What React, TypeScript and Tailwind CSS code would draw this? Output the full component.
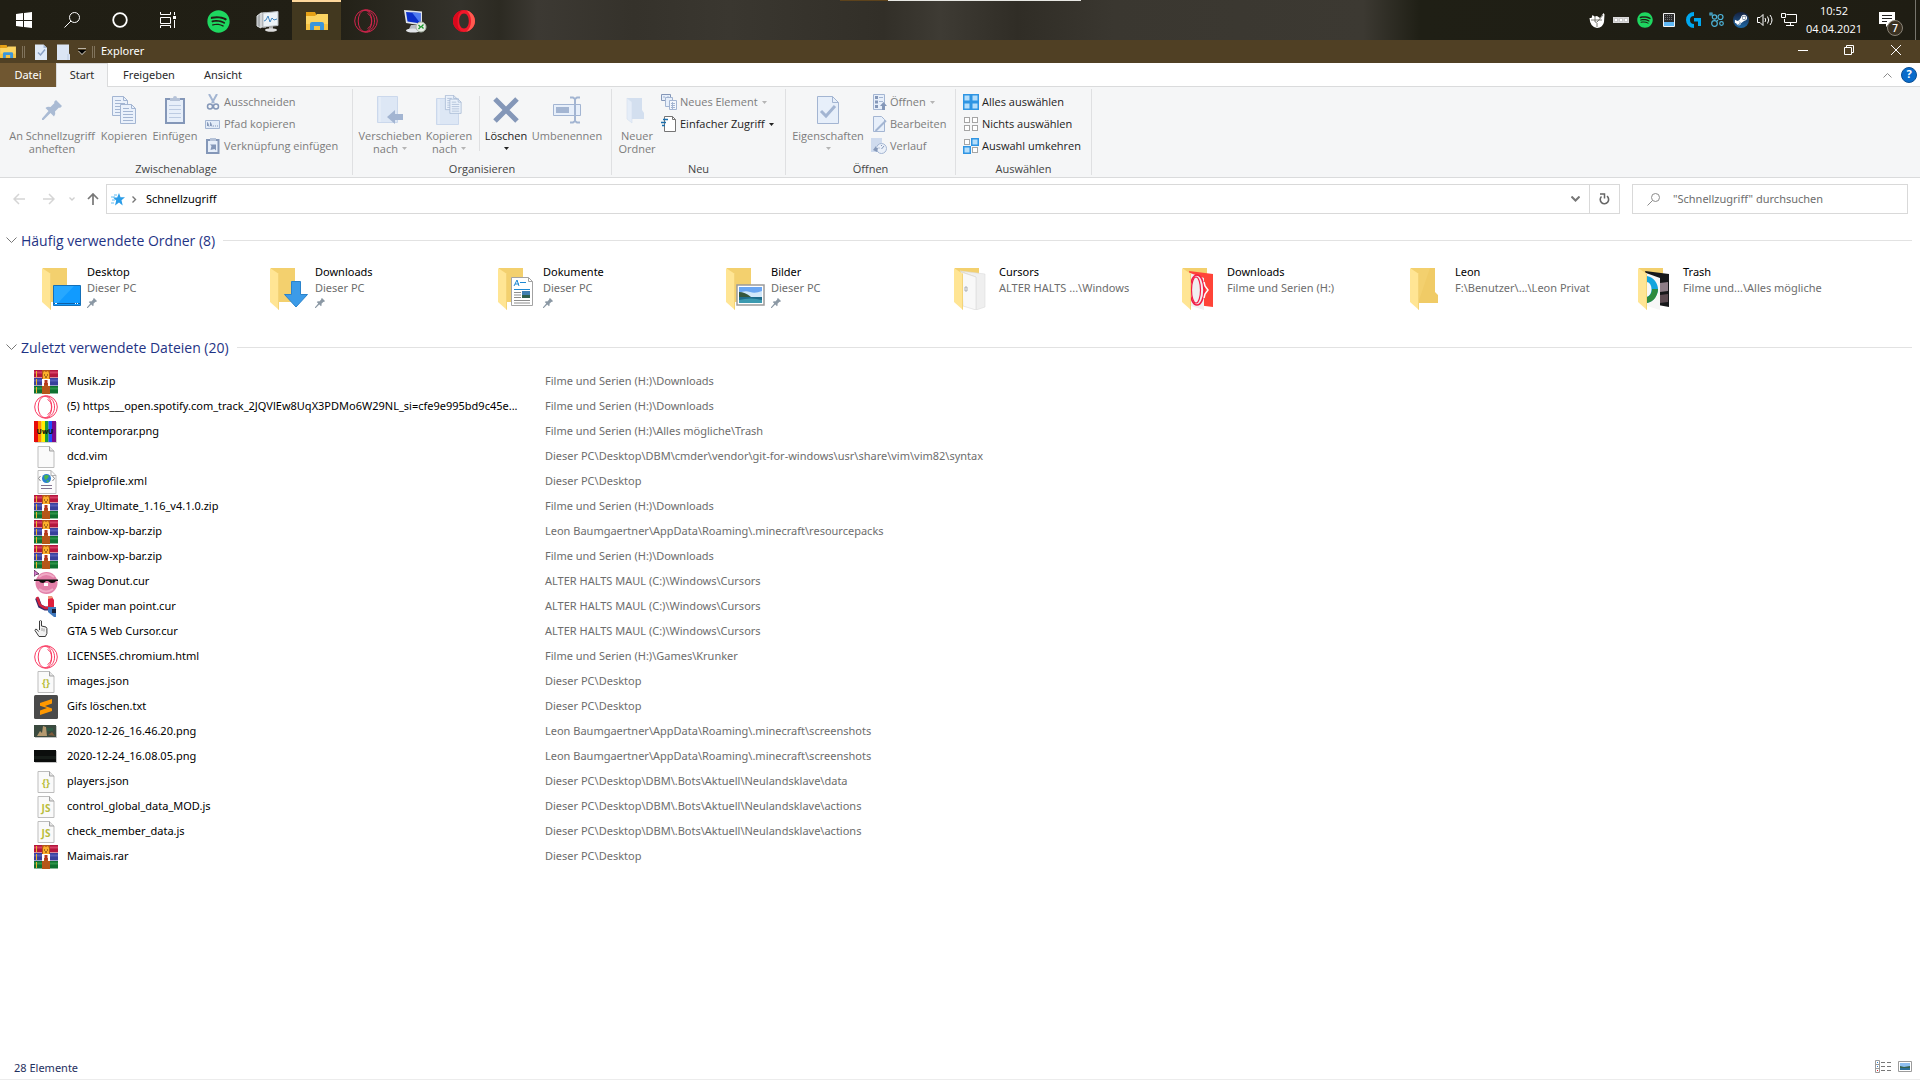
import { useState } from "react";
import type { ReactNode } from "react";
import { FaSpotify, FaSteamSymbol } from "react-icons/fa";

type IconProps = { size?: number };

/* ---------- shared icons ---------- */

function Svg({ w = 16, h = w, box, children }: { w?: number; h?: number; box?: string; children: ReactNode }) {
  return (
    <svg width={w} height={h} viewBox={box ?? `0 0 ${w} ${h}`} fill="none" className="shrink-0" aria-hidden="true">
      {children}
    </svg>
  );
}

function ExplorerIcon({ size = 22 }: IconProps) {
  return (
    <Svg w={size} h={Math.round((size * 18) / 22)} box="0 0 22 18">
      <path d="M0 0h9l1 2v4H0z" fill="#e6a117" />
      <path d="M0 4h9l2-2h11v15H0z" fill="#fcd462" />
      <path d="M0 12h22v6H0z" fill="#f6c343" />
      <path d="M4 18v-6q0-2 2-2h10q2 0 2 2v6h-4v-4H8v4z" fill="#3a96dd" />
    </Svg>
  );
}

function OperaGxIcon({ size = 24, color = "#fa3a62" }: IconProps & { color?: string }) {
  return (
    <Svg w={size} box="0 0 24 24">
      <g stroke={color}>
        <circle cx="12" cy="12" r="11.3" />
        <ellipse cx="11" cy="12" rx="6.8" ry="10.8" />
        <path d="M13.500 4.500c2.700 1.200 4 4 4 7.500s-1.300 6.300-4 7.500" />
        <path d="M13 1c5 2 7.500 6 7.500 11S18 21 13 23" />
      </g>
    </Svg>
  );
}

function Caret({ dark }: { dark?: boolean }) {
  return (
    <Svg w={5} h={3}>
      <path d="M0 0h5L2.500 3z" fill={dark ? "#222222" : "#b5b5b5"} />
    </Svg>
  );
}

function PinIcon({ size = 10, color = "#8b98a4" }: IconProps & { color?: string }) {
  return (
    <Svg w={size} box="0 0 20 20">
      <path d="M14 0l6 6-2 2-1-.5-4 4q1 3-1 5l-3.500-3.500L1.500 20 0 20v-1.500L6.500 11 3.500 8q2-2 5-1l4-4L12 2z" fill={color} />
    </Svg>
  );
}

/* ---------- taskbar ---------- */

const taskbarApps: { label: string; icon: ReactNode; active?: boolean }[] = [
  { label: "Spotify", icon: <FaSpotify size={23} color="#1ed760" /> },
  {
    label: "Leistungsüberwachung",
    icon: (
      <Svg w={24} h={22}>
        <path d="M1 6l4-3v15l-4-2zM5 3h5v14H5z" fill="#a9adb0" stroke="#dfe2e4" />
        <path d="M7 3l15-1.500v14L7 17z" fill="#edf3f7" stroke="#b9bec2" />
        <path d="M8 11l2-1 2-4 2 6 2-4 2 2 3-1" stroke="#3f83bd" />
        <path d="M13 16h4v3h-4z" fill="#aaa" />
        <ellipse cx="15" cy="20" rx="6" ry="1.800" fill="#dcdcdc" />
      </Svg>
    ),
  },
  { label: "Explorer", icon: <ExplorerIcon />, active: true },
  { label: "Opera GX", icon: <OperaGxIcon color="#d3244d" /> },
  {
    label: "Remotedesktop",
    icon: (
      <Svg w={24} h={24}>
        <path d="M1 1l18 1.500v14L3 14z" fill="#e0e4ea" />
        <path d="M3 3l14.500 1v10.500L4.500 12.500z" fill="#0b2fc9" />
        <path d="M9 3.500l8.500.5v10.500z" fill="#4f7bf0" />
        <path d="M8 16h6l2 4H6z" fill="#b9bdc4" />
        <ellipse cx="10" cy="21.500" rx="7" ry="2" fill="#e2e4e8" />
        <circle cx="18" cy="18" r="5" fill="#e9ece6" stroke="#a9b3a5" />
        <path d="M15.500 16l2 2-2 2M20.500 15.500l-2 2 2 2" stroke="#1e9a2f" strokeWidth="1.300" />
      </Svg>
    ),
  },
  {
    label: "Opera",
    icon: (
      <Svg w={24} h={24}>
        <path
          d="M12 1c6 0 11 5 11 11s-5 11-11 11S1 18 1 12 6 1 12 1zm0 3.500c-3 0-4.800 3.400-4.800 7.500s1.800 7.500 4.800 7.500 4.800-3.400 4.800-7.500S15 4.500 12 4.500z"
          fill="#f0182a"
          fillRule="evenodd"
        />
        <path d="M14 1.200c5 1 9 5.500 9 10.800s-4 9.800-9 10.800c3-2 5-6 5-10.800s-2-8.800-5-10.800z" fill="#ff5a50" />
        <path d="M12 1C6 1 1 6 1 12s5 11 11 11c-2-.3-3.500-1-4.800-3C5 18 5 6 7.500 4 9 2 10.500 1.300 12 1z" fill="#d9081c" />
      </Svg>
    ),
  },
];

const trayIcons: { label: string; icon: ReactNode }[] = [
  {
    label: "Foldervisor",
    icon: (
      <Svg>
        <path d="M.5 6h2l1-3 2 1.500L8 4l3 2 3.500-5 1 1.500-.5 7.500q-1 5.500-7 6-7-1-7.500-10z" fill="#fff" />
        <path d="M2 8h11M6 4v6M9 9l5-6M6 10q2 1 3-1M8 11v4" stroke="#5b5a52" strokeWidth=".8" />
      </Svg>
    ),
  },
  {
    label: "Tastatur",
    icon: (
      <Svg>
        <path d="M0 5h16v6H0z" fill="#d9d9d9" />
        <path d="M1.500 6.500h3v3h-3zM6.500 6.500h3v3h-3zM11.500 6.500h3v3h-3z" fill="#fff" stroke="#b5b5b5" strokeWidth=".6" />
      </Svg>
    ),
  },
  { label: "Spotify", icon: <FaSpotify size={16} color="#1ed760" /> },
  {
    label: "Touchpad",
    icon: (
      <Svg>
        <path d="M2.500 1.500h11v13h-11z" fill="#2b2b2b" stroke="#f2f2f2" />
        <path d="M3 10h10v4H3z" fill="#5fb8f5" />
        <path d="M4 3.500h8M4 5.500h8M4 7.500h8" stroke="#777" strokeDasharray="1 1" />
      </Svg>
    ),
  },
  {
    label: "Logitech G HUB",
    icon: (
      <Svg>
        <path d="M9 0v4a4 4 0 0 0 0 8v4A8 8 0 0 1 9 0z" fill="#00a8f0" />
        <path d="M9 6h7v8h-3v-4.500H9z" fill="#00a8f0" />
      </Svg>
    ),
  },
  {
    label: "Verbindungen",
    icon: (
      <Svg>
        <g stroke="#4db4da" strokeWidth="1.200">
          <circle cx="5.500" cy="5" r="2.200" />
          <circle cx="11.500" cy="5" r="2.500" />
          <circle cx="5.500" cy="11.500" r="2.800" />
          <circle cx="12.500" cy="11.500" r="1.800" />
          <path d="M1 1h2v2H1zM8 8l1 1" />
        </g>
      </Svg>
    ),
  },
  {
    label: "Steam",
    icon: (
      <span className="flex size-4 items-center justify-center rounded-full bg-linear-to-b from-[#14213f] to-[#1d6aa8] text-white">
        <FaSteamSymbol size={14} />
      </span>
    ),
  },
  {
    label: "Lautstärke",
    icon: (
      <Svg>
        <g stroke="#fff">
          <path d="M.5 5.500h2.500l3-3v11l-3-3H.5z" />
          <path d="M8 6q1.500 2 0 4M10.500 4.500q2.500 3.500 0 7M13 3q4 5 0 10" />
        </g>
      </Svg>
    ),
  },
  {
    label: "Netzwerk",
    icon: (
      <Svg>
        <g stroke="#fff">
          <path d="M5.500 2.500h10v8H3.500V7M.5 1.500h4v4h-4zM9.500 10.500v3M5 13.500h8" />
        </g>
      </Svg>
    ),
  },
];

function Taskbar() {
  return (
    <header className="relative flex h-10 items-stretch bg-[linear-gradient(to_right,#201e14_0%,#211f15_17%,#34322b_24%,#2c2a22_26%,#3c3933_28%,#35322b_33%,#3a3730_38%,#322f28_46%,#3e3b34_49%,#302d26_53%,#3a3730_58%,#3c3932_71%,#1f1f15_74%,#1f1d13_100%)] text-white">
      <nav aria-label="Taskleiste" className="flex items-stretch">
        <TaskButton label="Start">
          <Svg w={16}>
            <path d="M0 2l7-1v7H0zM8 1l8-1v8H8zM0 9h7v6l-7-1zM8 9h8v7l-8-1z" fill="#fff" />
          </Svg>
        </TaskButton>
        <TaskButton label="Suche">
          <Svg w={16}>
            <circle cx="10.500" cy="5.500" r="5" stroke="#fff" />
            <path d="M7 9l-6.500 6.500" stroke="#fff" />
          </Svg>
        </TaskButton>
        <TaskButton label="Cortana">
          <Svg w={16}>
            <circle cx="8" cy="8" r="6.800" stroke="#fff" strokeWidth="1.800" />
          </Svg>
        </TaskButton>
        <TaskButton label="Aktive Anwendungen">
          <Svg w={16}>
            <path d="M.5 0v2.500h10V0M.5 5.500h10v6H.5zM.5 16v-2.500h10V16M14.500 0v3M14.500 8v8" stroke="#fff" />
            <path d="M13 4h3v3h-3z" fill="#fff" />
          </Svg>
        </TaskButton>
        <div className="ml-[2px] flex items-stretch">
          {taskbarApps.map((app) => (
            <button
              key={app.label}
              type="button"
              aria-label={app.label}
              className={`flex w-[49px] items-center justify-center border-t-2 ${
                app.active ? "border-[#ffd89b] bg-[#42381f]" : "border-transparent"
              }`}
            >
              {app.icon}
            </button>
          ))}
        </div>
      </nav>
      {/* edge of the hidden media overlay */}
      <div className="absolute left-[840px] top-0 flex h-px">
        <span className="w-12 bg-[#5d431c]" />
        <span className="w-[193px] bg-[#e8e8e4]" />
      </div>
      <div className="ml-auto flex items-stretch">
        {trayIcons.map((t) => (
          <button key={t.label} type="button" aria-label={t.label} className="flex w-6 items-center justify-center">
            {t.icon}
          </button>
        ))}
        <button type="button" className="w-[66px] text-center text-[11px] leading-[18px]">
          10:52
          <br />
          04.04.2021
        </button>
        <button type="button" aria-label="7 neue Benachrichtigungen" className="relative flex w-12 items-center justify-center pr-2">
          <Svg w={16}>
            <path d="M0 0h16v12h-6l-3 3v-3H0z" fill="#fff" />
            <path d="M3 3.500h10M3 6.500h10M3 9.500h5" stroke="#222" />
          </Svg>
          <span className="absolute bottom-1 right-3 flex size-4 items-center justify-center rounded-full border border-[#8a8478] bg-[#3a3122] text-[10px] font-semibold">
            7
          </span>
        </button>
        <span className="w-[5px] border-l border-[#77756d]" />
      </div>
    </header>
  );
}

function TaskButton({ label, children }: { label: string; children: ReactNode }) {
  return (
    <button type="button" aria-label={label} className="flex w-12 items-center justify-center">
      {children}
    </button>
  );
}

/* ---------- title bar + tabs ---------- */

function TitleBar() {
  return (
    <div className="flex h-[23px] items-center bg-[#504024] text-white">
      <ExplorerIcon size={16} />
      <span className="ml-1.5 h-3 w-[3px] border-x border-[#80735c]" />
      <button type="button" aria-label="Eigenschaften" className="ml-2.5">
        <Svg w={12} h={16}>
          <path d="M0 .5h8.500L12 4v12H0z" fill="#dfe9f6" />
          <path d="M8.500.5L12 4H8.500z" fill="#a9bbd6" />
          <path d="M3 8.500l2.500 2.500L10 5.500" stroke="#8ba1c2" strokeWidth="1.500" />
        </Svg>
      </button>
      <button type="button" aria-label="Neuer Ordner" className="ml-2.5">
        <Svg w={13} h={16}>
          <path d="M0 .5h12v9l1 1V16H0z" fill="#dbe5f4" />
          <path d="M11 10v6" stroke="#b9c8df" />
        </Svg>
      </button>
      <button type="button" aria-label="Symbolleiste anpassen" className="ml-2">
        <Svg w={8} h={7}>
          <path d="M0 .5h8" stroke="#b9b2a4" />
          <path d="M0 3h8L4 7z" fill="#d8d4cb" />
          <path d="M0 2h8L4 6z" fill="#000" />
        </Svg>
      </button>
      <span className="ml-1.5 h-3 w-[3px] border-x border-[#80735c]" />
      <h1 className="ml-1.5 font-['Noto_Sans',sans-serif] text-[11px]">Explorer</h1>
      <div className="mb-[3px] ml-auto flex items-stretch self-stretch">
        <button type="button" aria-label="Minimieren" className="flex w-[46px] items-center justify-center">
          <Svg w={10}>
            <path d="M0 5.500h10" stroke="#fff" />
          </Svg>
        </button>
        <button type="button" aria-label="Verkleinern" className="flex w-[46px] items-center justify-center">
          <Svg w={10}>
            <path d="M.5 2.500h7v7h-7zM2.500 2V.5h7v7H8" stroke="#fff" />
          </Svg>
        </button>
        <button type="button" aria-label="Schließen" className="flex w-12 items-center justify-center">
          <Svg w={10}>
            <path d="M0 0l10 10M10 0L0 10" stroke="#fff" />
          </Svg>
        </button>
      </div>
    </div>
  );
}

const tabs = [
  { name: "Start", width: "w-[52px]" },
  { name: "Freigeben", width: "w-[82px]" },
  { name: "Ansicht", width: "w-[66px]" },
];

function TabBar() {
  const [active, setActive] = useState("Start");
  return (
    <div className="flex h-6 items-stretch border-b border-[#dadbdc] font-['Noto_Sans',sans-serif] text-[11px] text-[#2b2b2b]">
      <button type="button" className="-mb-px w-14 bg-[#705731] text-white">
        Datei
      </button>
      {tabs.map((tab) => (
        <button
          key={tab.name}
          type="button"
          onClick={() => setActive(tab.name)}
          className={`-mb-px ${tab.width} ${
            tab.name === active ? "border-x border-t border-[#dadbdc] bg-[#f5f6f7]" : ""
          }`}
        >
          {tab.name}
        </button>
      ))}
      <div className="ml-auto flex items-center gap-[9px] pr-[3px]">
        <button type="button" aria-label="Menüband minimieren">
          <Svg w={9} h={6}>
            <path d="M.5 5.500l4-4 4 4" stroke="#8a8a8a" />
          </Svg>
        </button>
        <button
          type="button"
          aria-label="Hilfe"
          className="flex size-4 items-center justify-center rounded-full border border-[#0b4f94] bg-[#0a6ccb] text-[11px] font-bold text-white"
        >
          ?
        </button>
      </div>
    </div>
  );
}

/* ---------- ribbon ---------- */

// colours of the greyed-out ribbon artwork
const LINE = "#a3b5d2";
const FILL = "#dde7f5";
const DEEP = "#8497b8";

function BigButton({
  icon,
  lines,
  width,
  caret,
  enabled,
}: {
  icon: ReactNode;
  lines: string[];
  width: string;
  caret?: boolean;
  enabled?: boolean;
}) {
  return (
    <button
      type="button"
      disabled={!enabled}
      className={`flex ${width} shrink-0 flex-col items-center pt-[5px] text-[11px] leading-[13px] whitespace-nowrap ${
        enabled ? "text-[#222222]" : "text-[#7c7c7c]"
      }`}
    >
      <span className="mb-[5px] flex h-7 items-center">{icon}</span>
      <span>{lines[0]}</span>
      <span className="flex h-[13px] items-center gap-1">
        {lines[1]}
        {caret && <Caret dark={enabled} />}
      </span>
    </button>
  );
}

function SmallButton({ icon, label, caret, enabled }: { icon: ReactNode; label: string; caret?: boolean; enabled?: boolean }) {
  return (
    <button
      type="button"
      disabled={!enabled}
      className={`flex h-[22px] items-center gap-[3px] text-[11px] whitespace-nowrap ${
        enabled ? "text-[#222222]" : "text-[#7c7c7c]"
      }`}
    >
      {icon}
      <span className="pr-px">{label}</span>
      {caret && <Caret dark={enabled} />}
    </button>
  );
}

function RibbonGroup({ label, width, children }: { label: string; width: string; children: ReactNode }) {
  return (
    <>
      <section aria-label={label} className={`${width} flex shrink-0 flex-col pt-1`}>
        <div className="flex h-[66px]">{children}</div>
        <div className="mt-1 h-4 text-center text-[11px] leading-4 text-[#444444]">{label}</div>
      </section>
      <span className="my-[2px] w-px bg-[#dfe0e2]" />
    </>
  );
}

function DocLines({ x, y }: { x: number; y: number }) {
  return (
    <g transform={`translate(${x} ${y})`}>
      <path d="M.5.5h11l4 4v15H.5z" fill="#eaf1fb" stroke={LINE} />
      <path d="M11.500.5v4h4" stroke={LINE} />
      <path d="M3 4.500h6M3 7.500h10M3 10.500h10M3 13.500h10M3 16.500h10" stroke={LINE} />
    </g>
  );
}

function SelectGrid({ on }: { on: boolean[] }) {
  const spots = [[1, 1], [9, 1], [1, 9], [9, 9]];
  return (
    <Svg>
      {spots.map(([x, y], i) =>
        on[i] ? (
          <rect key={i} x={x - 0.25} y={y - 0.25} width="6.500" height="6.500" fill="#b5defb" stroke="#2f95e3" strokeWidth="1.500" />
        ) : (
          <rect key={i} x={x + 0.5} y={y + 0.5} width="5" height="5" fill="#fff" stroke="#a5a5a5" />
        )
      )}
    </Svg>
  );
}

function Ribbon() {
  return (
    <div className="flex border-b border-[#dadbdc] bg-[#f5f6f7]">
      <RibbonGroup label="Zwischenablage" width="w-[352px]">
        <div className="flex pl-1">
          <BigButton width="w-24" lines={["An Schnellzugriff", "anheften"]} icon={<PinIcon size={20} color="#aabbd4" />} />
          <BigButton
            width="w-12"
            lines={["Kopieren"]}
            icon={
              <Svg w={24} h={28}>
                <DocLines x={0} y={0} />
                <DocLines x={8} y={8} />
              </Svg>
            }
          />
          <BigButton
            width="w-[54px]"
            lines={["Einfügen"]}
            icon={
              <Svg w={20} h={28}>
                <path d="M1 3h18v24H1z" fill="#e7effa" stroke={DEEP} strokeWidth="2" />
                <path d="M5 5V2h3q0-2 2-2t2 2h3v3z" fill="#b6c3d8" />
                <path d="M4 9.500h12M4 13.500h12M4 17.500h12M4 21.500h12" stroke="#bccbe2" />
              </Svg>
            }
          />
        </div>
        <div className="ml-[3px] flex flex-col">
          <SmallButton
            label="Ausschneiden"
            icon={
              <Svg>
                <path d="M4 0l5 9M12 0L7 9" stroke={LINE} strokeWidth="2" />
                <circle cx="5" cy="12.500" r="2.500" stroke={DEEP} strokeWidth="1.500" />
                <circle cx="11" cy="12.500" r="2.500" stroke={DEEP} strokeWidth="1.500" />
              </Svg>
            }
          />
          <SmallButton
            label="Pfad kopieren"
            icon={
              <Svg>
                <path d="M.5 4.500h14v8H.5z" fill="#e3ecf8" stroke={LINE} />
                <path d="M2.500 6.500l1.500 4M5.500 6.500l1.500 4M2.500 10V6.500M5.500 10V6.500M8 10h1M10 10h1M12 10h1" stroke={DEEP} />
              </Svg>
            }
          />
          <SmallButton
            label="Verknüpfung einfügen"
            icon={
              <Svg>
                <path d="M2 2h11.500v13H2z" fill="#e7effa" stroke={DEEP} strokeWidth="2" />
                <path d="M5 0h6v3H5z" fill="#b6c3d8" />
                <path d="M5.500 12l1-4-1.500-1.500h6v6L9.500 11z" fill={DEEP} />
              </Svg>
            }
          />
        </div>
      </RibbonGroup>

      <RibbonGroup label="Organisieren" width="w-[258px]">
        <div className="flex pl-[5px]">
          <BigButton
            width="w-16"
            lines={["Verschieben", "nach"]}
            caret
            icon={
              <Svg w={26} h={28}>
                <path d="M.5.5h20v26H.5z" fill={FILL} stroke="#cbd8ec" />
                <path d="M3 1v25" stroke="#ecf2fa" />
                <path d="M10 21l8-7v4h8v6h-8v4z" fill={LINE} />
              </Svg>
            }
          />
          <BigButton
            width="w-[54px]"
            lines={["Kopieren", "nach"]}
            caret
            icon={
              <Svg w={26} h={30}>
                <path d="M.5 3.500h22v26H.5z" fill={FILL} stroke="#cbd8ec" />
                <path d="M3 4v25" stroke="#ecf2fa" />
                <g transform="translate(9 0) scale(.75)">
                  <DocLines x={0} y={0} />
                  <DocLines x={6} y={5} />
                </g>
              </Svg>
            }
          />
          <span className="ml-[3px] mt-[5px] h-[55px] w-px bg-[#dfe0e2]" />
          <BigButton
            width="w-[52px]"
            lines={["Löschen"]}
            caret
            enabled
            icon={
              <Svg w={26} h={26}>
                <path d="M2 2l22 22M24 2L2 24" stroke={DEEP} strokeWidth="5" />
              </Svg>
            }
          />
          <BigButton
            width="w-[70px]"
            lines={["Umbenennen"]}
            icon={
              <Svg w={28} h={28}>
                <path d="M.5 8.500h27v11H.5z" fill="#e7effa" stroke={LINE} />
                <path d="M3 11h13v6H3z" fill={LINE} />
                <path d="M22 2v24M17 1.500h3l2 1.500 2-1.500h3M17 26.500h3l2-1.500 2 1.500h3" stroke={LINE} strokeWidth="2" />
              </Svg>
            }
          />
        </div>
      </RibbonGroup>

      <RibbonGroup label="Neu" width="w-[173px]">
        <div className="flex pl-[2px]">
          <BigButton
            width="w-[46px]"
            lines={["Neuer", "Ordner"]}
            icon={
              <Svg w={22} h={28}>
                <path d="M1 2h15v12l2 3v6H1z" fill="#d3dfef" />
                <path d="M1 2l5 4v21l-5-4z" fill="#e5edf8" stroke="#d3dfef" strokeWidth=".6" />
              </Svg>
            }
          />
        </div>
        <div className="ml-px flex flex-col">
          <SmallButton
            label="Neues Element"
            caret
            icon={
              <Svg>
                <path d="M.5.5h9v6h-9z" fill="#e7effa" stroke={DEEP} />
                <path d="M4.500 3.500h7v9h-7z" fill="#e7effa" stroke={LINE} />
                <path d="M8.500 6.500h7v9h-7z" fill="#f3f7fd" stroke={LINE} />
                <path d="M2 3h2M6 3h2M10 9.500h4M10 11.500h4M10 13.500h4M11.500 8v7" stroke={LINE} />
              </Svg>
            }
          />
          <SmallButton
            label="Einfacher Zugriff"
            caret
            enabled
            icon={
              <Svg>
                <path d="M3.500.5h8l3 3v12h-11z" fill="#fff" stroke="#757575" />
                <path d="M11.500.5v3h3" stroke="#757575" />
                <path d="M2 3.500h5M0 6.500h5M1 9.500h3" stroke="#1b6fae" strokeWidth="1.300" />
              </Svg>
            }
          />
        </div>
      </RibbonGroup>

      <RibbonGroup label="Öffnen" width="w-[169px]">
        <div className="flex pl-1">
          <BigButton
            width="w-[76px]"
            lines={["Eigenschaften"]}
            caret
            icon={
              <Svg w={22} h={28}>
                <path d="M.5.5h15l6 6v21H.5z" fill="#e7effa" stroke={LINE} />
                <path d="M15.500.5v6h6" stroke={LINE} />
                <path d="M4 15l5 5 9-10" stroke={LINE} strokeWidth="3" />
              </Svg>
            }
          />
        </div>
        <div className="ml-[5px] flex flex-col">
          <SmallButton
            label="Öffnen"
            caret
            icon={
              <Svg>
                <path d="M2.500.5h11v15h-11z" fill="#e7effa" stroke={LINE} />
                <path d="M4 2h3v3H4zM4 6.500h3v3H4zM4 11h3v3H4z" fill={DEEP} />
                <path d="M8 3.500h4M8 7.500h4" stroke={LINE} />
                <path d="M12.500 8l3.500 4h-2v4h-3v-4H9z" fill={DEEP} />
              </Svg>
            }
          />
          <SmallButton
            label="Bearbeiten"
            icon={
              <Svg>
                <path d="M2.500.5h8l3 3v12h-11z" fill="#e7effa" stroke={LINE} />
                <path d="M15 4.500l-8 8-2.500 2.500" stroke={LINE} strokeWidth="2" />
              </Svg>
            }
          />
          <SmallButton
            label="Verlauf"
            icon={
              <Svg>
                <path d="M0 0h11v14H0z" fill="#cfdbee" />
                <circle cx="10.500" cy="10.500" r="5" fill="#eaf0f9" stroke={LINE} />
                <path d="M10.500 11l2.500-3M7.500 10h1M10.500 7v1" stroke={DEEP} />
                <path d="M2 12l3-4v2h2l-1 4z" fill={DEEP} />
              </Svg>
            }
          />
        </div>
      </RibbonGroup>

      <RibbonGroup label="Auswählen" width="w-[135px]">
        <div className="ml-[7px] flex flex-col">
          <SmallButton enabled label="Alles auswählen" icon={<SelectGrid on={[true, true, true, true]} />} />
          <SmallButton enabled label="Nichts auswählen" icon={<SelectGrid on={[false, false, false, false]} />} />
          <SmallButton enabled label="Auswahl umkehren" icon={<SelectGrid on={[false, true, true, false]} />} />
        </div>
      </RibbonGroup>
    </div>
  );
}

/* ---------- address row ---------- */

function AddressRow() {
  return (
    <div className="flex h-[41px] items-center pl-1 pr-3 pt-px font-['Noto_Sans',sans-serif] text-[11px]">
      <button type="button" aria-label="Zurück" className="flex w-[30px] justify-center">
        <Svg w={12}>
          <path d="M12 6H1M6 1L1 6l5 5" stroke="#d5d5d5" strokeWidth="1.500" />
        </Svg>
      </button>
      <button type="button" aria-label="Vorwärts" className="flex w-[30px] justify-center">
        <Svg w={12}>
          <path d="M0 6h11M6 1l5 5-5 5" stroke="#d5d5d5" strokeWidth="1.500" />
        </Svg>
      </button>
      <button type="button" aria-label="Zuletzt besuchte Orte" className="flex w-4 justify-center">
        <Svg w={6} h={4}>
          <path d="M.5.5L3 3 5.500.5" stroke="#cfcfcf" strokeWidth="1.300" />
        </Svg>
      </button>
      <button type="button" aria-label="Nach oben" className="flex w-[26px] justify-center">
        <Svg w={12}>
          <path d="M6 12V1M1 6l5-5 5 5" stroke="#777" strokeWidth="1.700" />
        </Svg>
      </button>
      <div className="flex h-[30px] flex-1 items-center border border-[#d9d9d9]">
        <button type="button" aria-label="Schnellzugriff" className="ml-1">
          <Svg w={14} h={13}>
            <path d="M8 0l1.500 4.200H14l-3.500 3 1.200 5.300L8 9.500l-4 3 1.200-5L2 4.500h4.200z" fill="#2b9de8" />
            <path d="M0 4h4M1 7h3M0 10h3M3 2h3" stroke="#62bdf3" />
          </Svg>
        </button>
        <span className="ml-[7px]">
          <Svg w={5} h={7}>
            <path d="M.5.5l3 3-3 3" stroke="#777" strokeWidth="1.400" />
          </Svg>
        </span>
        <button type="button" className="ml-[9px] text-black">
          Schnellzugriff
        </button>
        <button type="button" aria-label="Vorherige Orte" className="ml-auto flex h-full w-7 items-center justify-center">
          <Svg w={9} h={6}>
            <path d="M.5.5l4 4 4-4" stroke="#777" strokeWidth="2" />
          </Svg>
        </button>
        <button type="button" aria-label="Aktualisieren" className="flex h-full w-[30px] items-center justify-center border-l border-[#d9d9d9]">
          <Svg w={11} h={12}>
            <path d="M8 3.200a4.200 4.200 0 1 1-5.500.3" stroke="#666" strokeWidth="1.600" />
            <path d="M1 1h4.500v4.500" stroke="#666" strokeWidth="1.500" />
          </Svg>
        </button>
      </div>
      <label className="ml-3 flex h-[30px] w-[276px] items-center border border-[#d9d9d9]">
        <span className="ml-3.5">
          <Svg w={13}>
            <circle cx="8.500" cy="4.500" r="4" stroke="#8b8b8b" />
            <path d="M5.500 7.500L.5 12.500" stroke="#8b8b8b" />
          </Svg>
        </span>
        <input
          type="text"
          aria-label="Suchen"
          placeholder={'"Schnellzugriff" durchsuchen'}
          className="ml-[13px] min-w-0 flex-1 outline-none placeholder:text-[#6d6d6d]"
        />
      </label>
    </div>
  );
}

/* ---------- folders ---------- */

function FolderIcon({ children, open }: { children?: ReactNode; open?: boolean }) {
  return (
    <Svg w={40} h={42}>
      <path d="M1 0h24v34H1z" fill="#f3d06e" />
      {!open && !children && <path d="M20 0h5v24l3 3v8H8z" fill="#f0cb66" />}
      {open && children}
      <path d="M0 0l9 6v36l-9-8z" fill="#ffe594" />
      <path d="M8 5l1 1v36l-1-1z" fill="#f4d478" />
      {!open && children}
    </Svg>
  );
}

const folders: { name: string; path: string; pinned?: boolean; icon: ReactNode }[] = [
  {
    name: "Desktop",
    path: "Dieser PC",
    pinned: true,
    icon: (
      <FolderIcon>
        <path d="M11.500 17.500h27v20h-27z" fill="#119bff" stroke="#1470b8" />
        <path d="M12 18h20L16 35h-4z" fill="#27a8ff" />
        <path d="M12 35.500h26" stroke="#0d5fa5" />
        <path d="M13 35.500h2M33 35.500h1M35 35.500h1" stroke="#fff" />
      </FolderIcon>
    ),
  },
  {
    name: "Downloads",
    path: "Dieser PC",
    pinned: true,
    icon: (
      <FolderIcon>
        <path d="M21.500 13.500h9v13h7L26 39 14.500 26.500h7z" fill="#3c9be8" stroke="#2a83cc" />
      </FolderIcon>
    ),
  },
  {
    name: "Dokumente",
    path: "Dieser PC",
    pinned: true,
    icon: (
      <FolderIcon>
        <path d="M13.500 9.500h17l4 4v24h-21z" fill="#fff" stroke="#a3a3a3" />
        <path d="M30.500 9.500v4h4" stroke="#a3a3a3" />
        <path d="M16 18l3-6 2 6M17 16h4M22 14.500h6M16 21.500h16" stroke="#1e88d2" />
        <path d="M16 24.500h7M16 27h7M16 29.500h7M16 32.500h16M16 35h16" stroke="#8d8d8d" />
        <path d="M24 23h8v7h-8z" fill="#3f7fb0" />
        <path d="M24 27h8v3h-8z" fill="#2d5f4c" />
      </FolderIcon>
    ),
  },
  {
    name: "Bilder",
    path: "Dieser PC",
    pinned: true,
    icon: (
      <FolderIcon>
        <svg x="10" y="16" width="29" height="22" viewBox="0 0 29 22">
          <path d="M1 1h27v20H1z" fill="#fff" stroke="#9b9b9b" strokeWidth="1.500" />
          <path d="M3 3h23v16H3z" fill="#6aa6f2" />
          <path d="M3 9q6-3 11-1t12-1v6H3z" fill="#d2e8fa" />
          <path d="M3 8q6 0 12 5H3z" fill="#35573d" />
          <path d="M3 13h23v6H3z" fill="#1d6c8c" />
          <path d="M3 16q12-3 23 0v3H3z" fill="#3c9ab0" />
        </svg>
      </FolderIcon>
    ),
  },
  {
    name: "Cursors",
    path: "ALTER HALTS ...\\Windows",
    icon: (
      <FolderIcon open>
        <path d="M6 3l25 3v33l-9 3V9z" fill="#efefef" stroke="#dcdcdc" strokeWidth=".6" />
        <path d="M7 4l15 5v33L9 38z" fill="#f8f8f8" stroke="#d8d8d8" strokeWidth=".6" />
        <path d="M11 19h2v4h-2z" stroke="#9aa0a6" strokeWidth=".8" />
      </FolderIcon>
    ),
  },
  {
    name: "Downloads",
    path: "Filme und Serien (H:)",
    icon: (
      <FolderIcon open>
        <path d="M7 3l24 3v33l-16-2z" fill="#ff4438" />
        <path d="M8 5l14 5v32L9 38z" fill="#f1eff0" />
        <ellipse cx="15" cy="22" rx="7" ry="15" stroke="#f21d45" strokeWidth="1.600" />
        <ellipse cx="14" cy="22" rx="4.500" ry="13" stroke="#f21d45" strokeWidth="1.200" />
        <path d="M22 14l1 4 3 4-3 4-1 4" stroke="#fff" strokeWidth="1.500" />
      </FolderIcon>
    ),
  },
  { name: "Leon", path: "F:\\Benutzer\\...\\Leon Privat", icon: <FolderIcon /> },
  {
    name: "Trash",
    path: "Filme und...\\Alles mögliche",
    icon: (
      <FolderIcon open>
        <path d="M7 3l24 3v33l-11-2z" fill="#17181a" />
        <path d="M22 15l8-1v9l-8 1z" fill="#8d7d86" />
        <path d="M22 27l8-1v8l-8 1z" fill="#5b4a50" />
        <path d="M8 5l14 5v32L9 38z" fill="#f7f7f7" />
        <path d="M9 8c7 1 11 8 11 13s-4 13-11 14v-6c6-2 6-14 0-15z" fill="#12a5dd" />
        <path d="M20 21c0 6-4 13-11 14v-6c3-1 5-4 5-8z" fill="#2d8a3e" />
      </FolderIcon>
    ),
  },
];

function SectionHeading({ children }: { children: ReactNode }) {
  return (
    <h2 className="flex h-[42px] items-center pl-1.5 pr-2 text-[14px] text-[#1f3485]">
      <button type="button" className="flex items-center gap-1 whitespace-nowrap">
        <Svg w={11} h={7}>
          <path d="M.5.5l5 5 5-5" stroke="#777" />
        </Svg>
        {children}
      </button>
      <span className="ml-2 h-px flex-1 bg-[#e2e2e2]" />
    </h2>
  );
}

/* ---------- files ---------- */

const rarIcon = (
  <Svg w={24} h={24}>
    <path d="M0 0h24v7.500H0z" fill="#b3163c" />
    <path d="M0 1.500h24v2H0z" fill="#d63f66" />
    <path d="M0 8h24v7.500H0z" fill="#39409c" />
    <path d="M0 9.500h24v2H0z" fill="#565dba" />
    <path d="M0 16h24v7.500H0z" fill="#0f7030" />
    <path d="M0 17.500h24v2H0z" fill="#2c9449" />
    <path d="M2.500 1v6M2.500 9v6M2.500 17v6" stroke="#f0b629" />
    <path d="M8 0h8v24H8z" fill="#b5561a" />
    <path d="M9 3l1-2 2 1 2-1 1 2v6H9z" fill="#fbb02c" />
    <path d="M10 5h1M13 5h1M11 7h2" stroke="#5d2a06" />
    <path d="M8 9h8v7h-2v-3h-4v3H8z" fill="#fff" />
    <path d="M10.500 10h3v5h-3z" fill="#b8341c" />
  </Svg>
);

function PageIcon({ mark }: { mark?: string }) {
  return (
    <Svg w={24} h={24}>
      <path d="M4 1.500h11.500l4.500 4.500v16.500H4z" fill="#fafafa" stroke="#bdbdbd" />
      <path d="M15.500 1.500V6H20" fill="#e6e6e6" stroke="#9f9f9f" />
      {mark && (
        <text x="12" y="17" textAnchor="middle" fontSize="10" fontWeight="700" fill="#b9bd3a">
          {mark}
        </text>
      )}
    </Svg>
  );
}

const gxIcon = <OperaGxIcon />;
const jsonIcon = <PageIcon mark="{}" />;
const jsIcon = <PageIcon mark="JS" />;

const files: { name: string; path: string; icon: ReactNode }[] = [
  { name: "Musik.zip", path: "Filme und Serien (H:)\\Downloads", icon: rarIcon },
  {
    name: "(5) https___open.spotify.com_track_2JQVlEw8UqX3PDMo6W29NL_si=cfe9e995bd9c45e...",
    path: "Filme und Serien (H:)\\Downloads",
    icon: gxIcon,
  },
  {
    name: "icontemporar.png",
    path: "Filme und Serien (H:)\\Alles mögliche\\Trash",
    icon: (
      <Svg w={24} h={24}>
        <path d="M1 2h22v21H1z" fill="#d0d0d0" />
        <path d="M0 1h4v21H0z" fill="#e60b0b" />
        <path d="M4 1h3.500v21H4z" fill="#ff8d00" />
        <path d="M7.500 1H11v21H7.500z" fill="#ffee00" />
        <path d="M11 1h3.500v21H11z" fill="#1c9a36" />
        <path d="M14.500 1H18v21h-3.500z" fill="#1c4fff" />
        <path d="M18 1h4v21h-4z" fill="#7a0a8c" />
        <text x="11" y="14" textAnchor="middle" fontSize="7" fontWeight="800" fill="#111">
          UwU
        </text>
      </Svg>
    ),
  },
  {
    name: "dcd.vim",
    path: "Dieser PC\\Desktop\\DBM\\cmder\\vendor\\git-for-windows\\usr\\share\\vim\\vim82\\syntax",
    icon: <PageIcon />,
  },
  {
    name: "Spielprofile.xml",
    path: "Dieser PC\\Desktop",
    icon: (
      <Svg w={24} h={24}>
        <path d="M4 .5h13l5 5v18H4z" fill="#fcfcfc" stroke="#bdbdbd" />
        <path d="M17 .5v5h5" stroke="#b0b0b0" />
        <circle cx="12.500" cy="8.500" r="4.500" fill="#2a7fd0" />
        <path d="M10 6q3-2 5 0l-2 3-2 1zM12 11l3-1-1 2.500z" fill="#4db848" />
        <path d="M6.500 6L4.500 8.500l2 2.500M18.500 6l2 2.500-2 2.500" stroke="#8a8a8a" />
        <path d="M7 15.500h11M7 18.500h11" stroke="#83738f" />
      </Svg>
    ),
  },
  { name: "Xray_Ultimate_1.16_v4.1.0.zip", path: "Filme und Serien (H:)\\Downloads", icon: rarIcon },
  { name: "rainbow-xp-bar.zip", path: "Leon Baumgaertner\\AppData\\Roaming\\.minecraft\\resourcepacks", icon: rarIcon },
  { name: "rainbow-xp-bar.zip", path: "Filme und Serien (H:)\\Downloads", icon: rarIcon },
  {
    name: "Swag Donut.cur",
    path: "ALTER HALTS MAUL (C:)\\Windows\\Cursors",
    icon: (
      <Svg w={24} h={24}>
        <circle cx="12.500" cy="13" r="11" fill="#e27fa8" />
        <path d="M5 7q7-6 15 0M5 19q7 5 14 0" stroke="#f0abc6" strokeWidth="2" />
        <path d="M10 13h4v3h-4z" fill="#fff" />
        <path d="M0 9.500h24v1.500h-2q-1 2-4 2-2 0-4-2h-2q-2 2-3 2-3 0-4-2H0z" fill="#0c0c0c" />
        <path d="M0 0l5 4-3 .5L0 6.500z" fill="#d77bd0" stroke="#3a1030" strokeWidth=".7" />
      </Svg>
    ),
  },
  {
    name: "Spider man point.cur",
    path: "ALTER HALTS MAUL (C:)\\Windows\\Cursors",
    icon: (
      <Svg w={24} h={24}>
        <path d="M3 3l3 8 5 2.500h5" stroke="#3b2a6b" strokeWidth="4" />
        <path d="M3 2l3 8 5 3h5" stroke="#d4213b" strokeWidth="2.500" />
        <path d="M14 2h4l2 3v8h-6z" fill="#df1f3c" />
        <path d="M14 1h4l1 2-5 1z" fill="#ef9a7c" />
        <path d="M14 12h8v10h-2l-6-5z" fill="#3f78bd" />
        <path d="M18 14h4v4h-4z" fill="#15203a" />
      </Svg>
    ),
  },
  {
    name: "GTA 5 Web Cursor.cur",
    path: "ALTER HALTS MAUL (C:)\\Windows\\Cursors",
    icon: (
      <Svg w={24} h={24}>
        <path
          d="M5.500 10V1q1-1.500 2 0v5l4.500 1 .9 1.500v5l-1.500 3H5L1 10.500q0-2 2-1l1.500 2"
          fill="#f1f1f1"
          stroke="#3c3c3c"
        />
        <path d="M8 8v3M10 8.500v3" stroke="#8a8a8a" strokeWidth=".8" />
      </Svg>
    ),
  },
  { name: "LICENSES.chromium.html", path: "Filme und Serien (H:)\\Games\\Krunker", icon: gxIcon },
  { name: "images.json", path: "Dieser PC\\Desktop", icon: jsonIcon },
  {
    name: "Gifs löschen.txt",
    path: "Dieser PC\\Desktop",
    icon: (
      <Svg w={24} h={24}>
        <rect width="24" height="24" rx="1.500" fill="#4a4a4a" />
        <path d="M6 8l12-4v4.500L11 11l7 2.500V16L6 20v-4.500l7-2.500-7-2.300z" fill="#ff9800" />
      </Svg>
    ),
  },
  {
    name: "2020-12-26_16.46.20.png",
    path: "Leon Baumgaertner\\AppData\\Roaming\\.minecraft\\screenshots",
    icon: (
      <Svg w={24} h={24}>
        <path d="M1 6h22v12H1z" fill="#c4c4c4" />
        <path d="M0 5h22v12H0z" fill="#3b4a3f" />
        <path d="M3 16l3-5 2 2 1-7 3 1 1 9z" fill="#b59a70" />
        <path d="M13 8h6v3h-6z" fill="#2f5b45" />
        <path d="M14 15l4-3 3 4z" fill="#7d5a3b" />
      </Svg>
    ),
  },
  {
    name: "2020-12-24_16.08.05.png",
    path: "Leon Baumgaertner\\AppData\\Roaming\\.minecraft\\screenshots",
    icon: (
      <Svg w={24} h={24}>
        <path d="M1 6h22v12H1z" fill="#c4c4c4" />
        <path d="M0 5h22v12H0z" fill="#0b0d0c" />
        <path d="M0 11h22v3H0z" fill="#161c18" />
      </Svg>
    ),
  },
  { name: "players.json", path: "Dieser PC\\Desktop\\DBM\\.Bots\\Aktuell\\Neulandsklave\\data", icon: jsonIcon },
  { name: "control_global_data_MOD.js", path: "Dieser PC\\Desktop\\DBM\\.Bots\\Aktuell\\Neulandsklave\\actions", icon: jsIcon },
  { name: "check_member_data.js", path: "Dieser PC\\Desktop\\DBM\\.Bots\\Aktuell\\Neulandsklave\\actions", icon: jsIcon },
  { name: "Maimais.rar", path: "Dieser PC\\Desktop", icon: rarIcon },
];

export default function App() {
  return (
    <div className="flex min-h-screen flex-col bg-white font-['Open_Sans',sans-serif] text-black">
      <Taskbar />
      <TitleBar />
      <TabBar />
      <Ribbon />
      <AddressRow />

      <main className="flex-1">
        <SectionHeading>Häufig verwendete Ordner (8)</SectionHeading>
        <ul className="flex min-h-[65px] flex-wrap pl-[42px] font-['Noto_Sans',sans-serif]">
          {folders.map((f) => (
            <li key={f.name + f.path} className="flex w-[228px] gap-[5px] pt-[3px] text-[11px] leading-4">
              <span className="pt-1">{f.icon}</span>
              <div className="min-w-0 whitespace-nowrap">
                <div>{f.name}</div>
                <div className="text-[#6d6d6d]">{f.path}</div>
                {f.pinned && (
                  <div className="pt-[2px]">
                    <PinIcon />
                  </div>
                )}
              </div>
            </li>
          ))}
        </ul>

        <SectionHeading>Zuletzt verwendete Dateien (20)</SectionHeading>
        <table className="mt-px w-full table-fixed text-left font-['Noto_Sans',sans-serif] text-[11px]">
          <colgroup>
            <col className="w-[545px]" />
            <col />
          </colgroup>
          <tbody>
            {files.map((f, i) => (
              <tr key={i} className="h-[25px]">
                <td className="p-0">
                  <div className="flex h-[25px] items-center gap-[9px] pl-[34px] whitespace-nowrap">
                    {f.icon}
                    <span>{f.name}</span>
                  </div>
                </td>
                <td className="p-0 text-[#6d6d6d]">{f.path}</td>
              </tr>
            ))}
          </tbody>
        </table>
      </main>

      <footer className="flex h-[26px] items-center border-b border-[#ececec] pl-3.5 pr-2 font-['Noto_Sans',sans-serif] text-[11px] text-[#1f3060]">
        <span className="pt-[3px]">28 Elemente</span>
        <div className="ml-auto flex items-center gap-[7px]">
          <button type="button" aria-label="Details">
            <Svg w={16} h={13}>
              <path d="M.5.5h4v12h-4zM.5 4.500h4M.5 8.500h4" stroke="#9a9a9a" />
              <path d="M6 2.500h4M12 2.500h4M6 6.500h4M12 6.500h4M6 10.500h4M12 10.500h4" stroke="#777" />
              <path d="M2 2h1v1H2zM2 6h1v1H2z" fill="#2c86d8" />
              <path d="M2 10h1v1H2z" fill="#d22" />
            </Svg>
          </button>
          <button type="button" aria-label="Große Symbole">
            <Svg w={14} h={11}>
              <path d="M.5.5h13v10H.5z" fill="#fff" stroke="#9b9b9b" />
              <path d="M2 2h10v7H2z" fill="#8fc0f2" />
              <path d="M2 5l4 1 6-1v4H2z" fill="#35624f" />
              <path d="M2 7h10v2H2z" fill="#2b6f9a" />
            </Svg>
          </button>
        </div>
      </footer>
    </div>
  );
}
